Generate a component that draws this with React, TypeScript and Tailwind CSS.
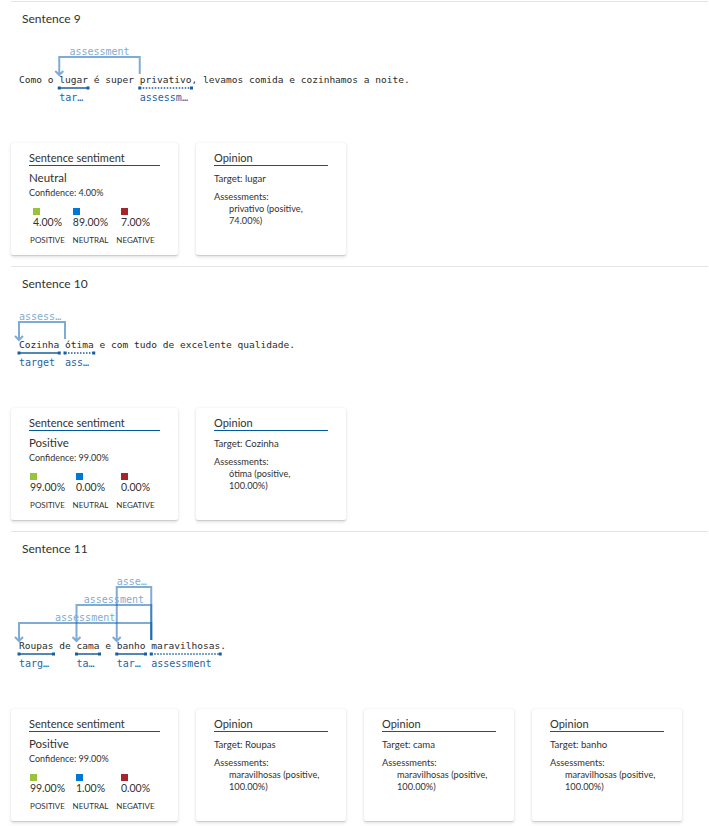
import React from 'react';

const CW = 5.75;
const X0 = 8;
const LEVEL = 18;

type Token = { start: number; len: number; kind: 'target' | 'assessment' };
type Arc = { from: number; to: number; level: number };
type Opinion = { target: string; assessment: string };
type Sentence = {
  title: string;
  text: string;
  tokens: Token[];
  arcs: Arc[];
  sentiment: string;
  confidence: string;
  scores: [string, string, string];
  opinions: Opinion[];
};

const sentences: Sentence[] = [
  {
    title: 'Sentence 9',
    text: 'Como o lugar é super privativo, levamos comida e cozinhamos a noite.',
    tokens: [
      { start: 7, len: 5, kind: 'target' },
      { start: 21, len: 9, kind: 'assessment' },
    ],
    arcs: [{ from: 21, to: 7, level: 1 }],
    sentiment: 'Neutral',
    confidence: '4.00%',
    scores: ['4.00%', '89.00%', '7.00%'],
    opinions: [{ target: 'lugar', assessment: 'privativo (positive, 74.00%)' }],
  },
  {
    title: 'Sentence 10',
    text: 'Cozinha ótima e com tudo de excelente qualidade.',
    tokens: [
      { start: 0, len: 7, kind: 'target' },
      { start: 8, len: 5, kind: 'assessment' },
    ],
    arcs: [{ from: 8, to: 0, level: 1 }],
    sentiment: 'Positive',
    confidence: '99.00%',
    scores: ['99.00%', '0.00%', '0.00%'],
    opinions: [{ target: 'Cozinha', assessment: 'ótima (positive, 100.00%)' }],
  },
  {
    title: 'Sentence 11',
    text: 'Roupas de cama e banho maravilhosas.',
    tokens: [
      { start: 0, len: 6, kind: 'target' },
      { start: 10, len: 4, kind: 'target' },
      { start: 17, len: 5, kind: 'target' },
      { start: 23, len: 12, kind: 'assessment' },
    ],
    arcs: [
      { from: 23, to: 0, level: 1 },
      { from: 23, to: 10, level: 2 },
      { from: 23, to: 17, level: 3 },
    ],
    sentiment: 'Positive',
    confidence: '99.00%',
    scores: ['99.00%', '1.00%', '0.00%'],
    opinions: [
      { target: 'Roupas', assessment: 'maravilhosas (positive, 100.00%)' },
      { target: 'cama', assessment: 'maravilhosas (positive, 100.00%)' },
      { target: 'banho', assessment: 'maravilhosas (positive, 100.00%)' },
    ],
  },
];

const mono = "font-['DejaVu_Sans_Mono',monospace]";

const Diagram = ({ s }: { s: Sentence }) => {
  const levels = Math.max(...s.arcs.map((a) => a.level));
  const textY = 53 + LEVEL * (levels - 1);
  const height = textY + 25;

  return (
    <div className="relative" style={{ height }}>
      <svg className="absolute left-0 top-0 overflow-visible" width="100%" height={height}>
        {s.arcs.map((a, i) => {
          const sx = X0 + a.from * CW;
          const tx = X0 + a.to * CW;
          const ly = textY - 23 - LEVEL * (a.level - 1);
          return (
            <path
              key={i}
              d={`M${sx} ${textY - 6} V${ly} H${tx} V${textY - 5} M${tx - 4} ${textY - 9} L${tx} ${textY - 5} L${tx + 4} ${textY - 9}`}
              fill="none"
              stroke="rgb(0,90,170)"
              strokeOpacity={0.5}
              strokeWidth={2}
            />
          );
        })}
        {s.tokens.map((t, i) => {
          const x1 = X0 + t.start * CW;
          const x2 = X0 + (t.start + t.len) * CW;
          const y = textY + 8;
          return (
            <g key={i} fill="#1b5e9e" stroke="#1b5e9e">
              <line
                x1={x1}
                x2={x2}
                y1={y}
                y2={y}
                strokeWidth={1.5}
                strokeDasharray={t.kind === 'assessment' ? '1.5 1.5' : undefined}
              />
              <rect x={x1 - 1.5} y={y - 1.5} width={3} height={3} stroke="none" />
              <rect x={x2 - 1.5} y={y - 1.5} width={3} height={3} stroke="none" />
            </g>
          );
        })}
      </svg>

      {s.arcs.map((a, i) => {
        const sx = X0 + a.from * CW;
        const tx = X0 + a.to * CW;
        const ly = textY - 23 - LEVEL * (a.level - 1);
        return (
          <div
            key={i}
            className={`absolute h-[12px] overflow-hidden text-ellipsis whitespace-nowrap text-center text-[10px] leading-[12px] text-[#80acd4] ${mono}`}
            style={{ left: Math.min(sx, tx), width: Math.abs(sx - tx), top: ly - 11 }}
          >
            assessment
          </div>
        );
      })}

      <div
        className={`absolute h-[14px] whitespace-pre text-[9.55px] leading-[14px] text-[#2b2b2b] ${mono}`}
        style={{ left: X0, top: textY - 7 }}
      >
        {s.text}
      </div>

      {s.tokens.map((t, i) => (
        <div
          key={i}
          className={`absolute h-[14px] overflow-hidden text-ellipsis whitespace-nowrap text-[10px] leading-[14px] text-[#1e64a6] ${mono}`}
          style={{ left: X0 + t.start * CW, width: t.len * CW, top: textY + 11 }}
        >
          {t.kind}
        </div>
      ))}
    </div>
  );
};

const Card = ({ title, width, children }: { title: string; width: string; children: React.ReactNode }) => (
  <div
    className={`${width} h-[112px] rounded-[2px] bg-white px-[18px] pt-[7px] shadow-[0_1.6px_3.6px_rgba(0,0,0,0.13),0_0.3px_0.9px_rgba(0,0,0,0.11)]`}
  >
    <div className="border-b-[1.5px] border-[#005a9e] text-[11px] leading-[15px] text-[#323130]">{title}</div>
    {children}
  </div>
);

const SentimentCard = ({ s }: { s: Sentence }) => {
  const cols = [
    { label: 'POSITIVE', color: 'bg-[#9ac23c]', w: 'w-[35px]' },
    { label: 'NEUTRAL', color: 'bg-[#0078d4]', w: 'w-[37px]' },
    { label: 'NEGATIVE', color: 'bg-[#a4262c]', w: 'w-[39px]' },
  ];
  return (
    <Card title="Sentence sentiment" width="w-[167px]">
      <div className="mt-[4px] text-[11.5px] leading-[16px] text-[#323130]">{s.sentiment}</div>
      <div className="text-[9px] leading-[13px] text-[#323130]">Confidence: {s.confidence}</div>
      <div className="mt-[9px] ml-[1px] flex gap-[7px]">
        {cols.map((c, i) => (
          <div key={c.label} className={`flex ${c.w} flex-col items-center`}>
            <div>
              <div className={`h-[7px] w-[7px] ${c.color}`} />
              <div className="text-[10.5px] leading-[14px] text-[#323130]">{s.scores[i]}</div>
            </div>
            <div className="mt-[5px] whitespace-nowrap text-[8px] leading-[12px] text-[#323130]">{c.label}</div>
          </div>
        ))}
      </div>
    </Card>
  );
};

const OpinionCard = ({ o }: { o: Opinion }) => (
  <Card title="Opinion" width="w-[150px]">
    <div className="mt-[7px] text-[9.6px] leading-[12px] text-[#323130]">Target: {o.target}</div>
    <div className="mt-[6px] text-[9.3px] leading-[12px] text-[#323130]">Assessments:</div>
    <div className="pl-[15px] text-[9.2px] leading-[12px] text-[#323130]">{o.assessment}</div>
  </Card>
);

export default function App() {
  return (
    <div className="min-h-screen bg-white pt-[1px] font-['Lato',sans-serif]">
      {sentences.map((s) => (
        <section key={s.title} className="ml-[11px] mr-[1px] border-t border-[#e6e4e2] pb-[11px]">
          <div className="pl-[11px] pt-[9px] text-[12px] leading-[16px] text-[#323130]">{s.title}</div>
          <Diagram s={s} />
          <div className="mt-[38px] flex gap-[18px]">
            <SentimentCard s={s} />
            {s.opinions.map((o) => (
              <OpinionCard key={o.target} o={o} />
            ))}
          </div>
        </section>
      ))}
    </div>
  );
}
